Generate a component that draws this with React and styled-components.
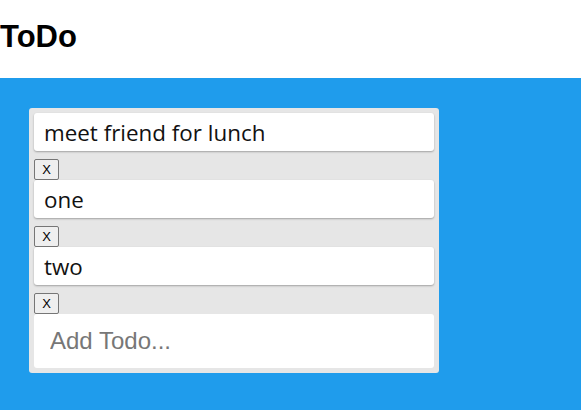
import React, { useState } from 'react';
import styled, { createGlobalStyle } from 'styled-components';

const GlobalStyle = createGlobalStyle`
  body {
    margin: 0;
    font-family: "Open Sans", "Noto Sans", sans-serif;
    background: #1f9cec;
  }
`;

const Header = styled.header`
  height: 78px;
  box-sizing: border-box;
  padding-bottom: 5px;
  background: #fff;
  display: flex;
  align-items: center;
`;

const Title = styled.h1`
  margin: 0;
  font-family: "Liberation Sans", Arial, sans-serif;
  font-size: 31px;
  font-weight: bold;
  color: #000;
`;

const Main = styled.main`
  background: #1f9cec;
  padding: 30px 29px;
  min-height: 332px;
  box-sizing: border-box;
`;

const Card = styled.div`
  width: 410px;
  box-sizing: border-box;
  background: #e6e6e6;
  border-radius: 3px;
  padding: 5px;
  display: flex;
  flex-direction: column;
`;

const Item = styled.div`
  display: flex;
  flex-direction: column;
`;

const ItemText = styled.div`
  height: 38px;
  background: #fff;
  border-radius: 3px;
  box-shadow: 0 1px 2px rgba(0, 0, 0, 0.3);
  display: flex;
  align-items: center;
  padding-left: 10px;
  font-size: 22.4px;
  color: #111;
`;

const RemoveButton = styled.button`
  margin-top: 8px;
  align-self: flex-start;
  width: 25px;
  height: 21px;
  padding: 0;
  font-family: "Liberation Sans", Arial, sans-serif;
  font-size: 13px;
  background: #efefef;
  border: 1px solid #767676;
  border-radius: 2px;
  color: #000;
`;

const AddInput = styled.input`
  height: 54px;
  box-sizing: border-box;
  border: none;
  border-radius: 3px;
  background: #fff;
  padding: 0 16px;
  font-family: "Liberation Sans", Arial, sans-serif;
  font-size: 24px;
  outline: none;
  &::placeholder {
    color: #777;
  }
`;

export default function App() {
  const [todos, setTodos] = useState(['meet friend for lunch', 'one', 'two']);
  const [text, setText] = useState('');

  const add = (e) => {
    e.preventDefault();
    if (!text.trim()) return;
    setTodos([...todos, text]);
    setText('');
  };

  return (
    <>
      <GlobalStyle />
      <Header>
        <Title>ToDo</Title>
      </Header>
      <Main>
        <Card>
          {todos.map((t, i) => (
            <Item key={i}>
              <ItemText>{t}</ItemText>
              <RemoveButton onClick={() => setTodos(todos.filter((_, j) => j !== i))}>X</RemoveButton>
            </Item>
          ))}
          <form onSubmit={add} style={{ display: 'flex', flexDirection: 'column' }}>
            <AddInput placeholder="Add Todo..." value={text} onChange={(e) => setText(e.target.value)} />
          </form>
        </Card>
      </Main>
    </>
  );
}
